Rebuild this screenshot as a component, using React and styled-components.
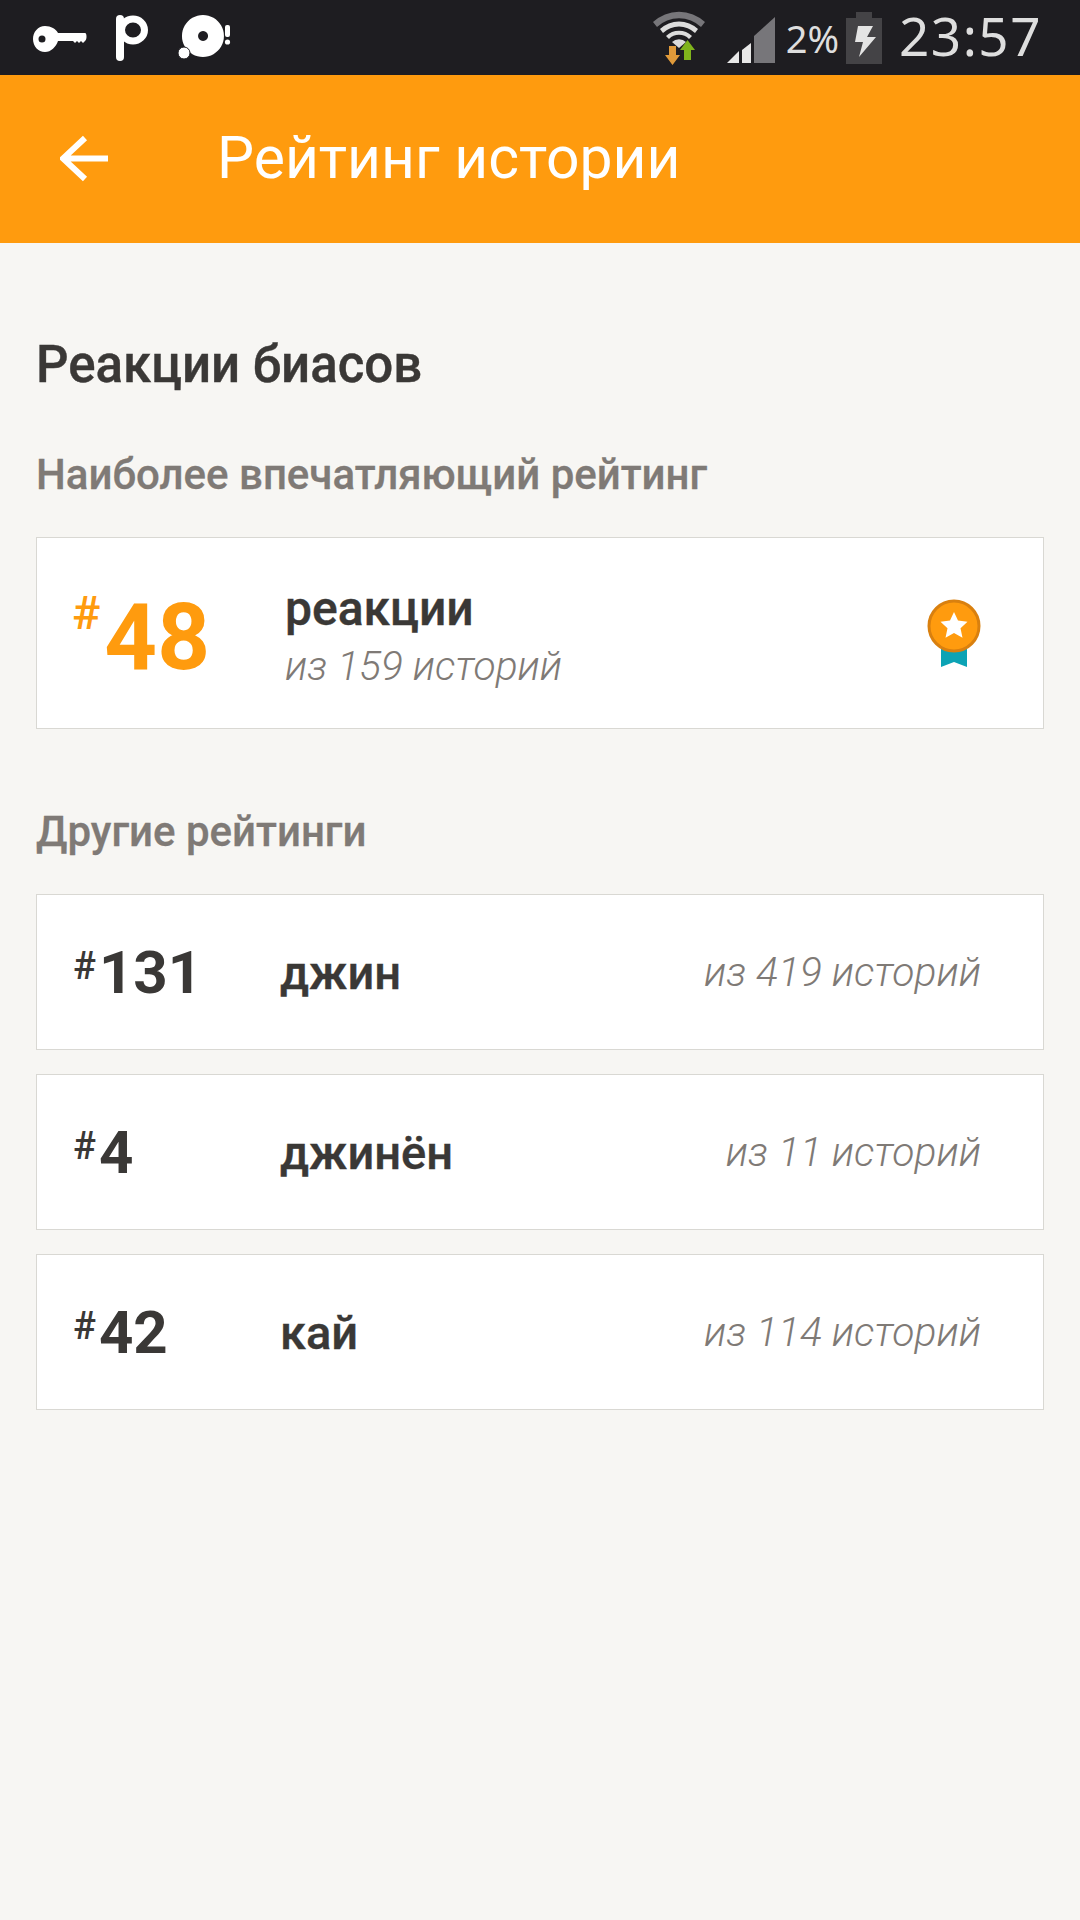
import React from "react";
import styled, { createGlobalStyle } from "styled-components";

const GlobalStyle = createGlobalStyle`
  html, body {
    margin: 0;
    padding: 0;
    background: #f7f6f3;
    font-family: Roboto, "Noto Sans", sans-serif;
  }
`;

const Page = styled.div`
  width: 1080px;
  height: 1920px;
  overflow: hidden;
  background: #f7f6f3;
`;

const StatusBar = styled.div`
  height: 75px;
  background: #1e1d21;
  display: flex;
  align-items: center;
  justify-content: space-between;
`;

const StatusGroup = styled.div`
  display: flex;
  align-items: center;
`;

const Percent = styled.span`
  font-family: "Noto Sans", sans-serif;
  font-size: 38px;
  color: #dedede;
  margin: 0 7px 0 11px;
`;

const Clock = styled.span`
  font-family: "Noto Sans", sans-serif;
  font-size: 53px;
  letter-spacing: 1.5px;
  color: #dedede;
  margin: 0 38px 4px 17px;
`;

const Header = styled.header`
  height: 168px;
  background: #ff9b0e;
  display: flex;
  align-items: center;
  padding-left: 60px;
`;

const Title = styled.h1`
  margin: 0 0 3px 109px;
  font-size: 58.8px;
  font-weight: 400;
  color: #fff;
`;

const Content = styled.main`
  padding: 93px 36px 0;
`;

const Heading = styled.h2`
  margin: 0;
  font-size: 51px;
  line-height: 58px;
  font-weight: 500;
  color: #3a3836;
  -webkit-text-stroke: 0.4px #3a3836;
`;

const SubHeading = styled.h3`
  margin: ${(p) => p.$top}px 0 ${(p) => p.$bottom}px;
  font-size: 42px;
  line-height: 48px;
  font-weight: 500;
  color: #7f7a76;
  -webkit-text-stroke: 0.3px #7f7a76;
`;

const Card = styled.div`
  box-sizing: border-box;
  height: ${(p) => (p.$featured ? 192 : 156)}px;
  margin-bottom: 24px;
  background: #fff;
  border: 1px solid #d9d8d3;
  display: flex;
  align-items: center;
  padding: 0 62px 0 36px;
`;

const Rank = styled.div`
  width: ${(p) => (p.$featured ? 212 : 207)}px;
  display: flex;
  align-items: flex-start;
  font-weight: 700;
  color: ${(p) => (p.$featured ? "#ff9b0e" : "#3a3836")};
  font-size: ${(p) => (p.$featured ? 92 : 60)}px;
  line-height: 1;
  padding-top: ${(p) => (p.$featured ? 10 : 2)}px;
`;

const Hash = styled.span`
  font-weight: 500;
  font-size: ${(p) => (p.$featured ? 47 : 38)}px;
  line-height: 1;
  margin-top: ${(p) => (p.$featured ? -3 : 4)}px;
  margin-left: ${(p) => (p.$featured ? -1 : 0)}px;
  margin-right: ${(p) => (p.$featured ? 4 : 3)}px;
`;

const Info = styled.div`
  flex: 1;
  display: flex;
  flex-direction: column;
  padding-top: ${(p) => (p.$featured ? 6 : 2)}px;
`;

const Name = styled.div`
  font-size: ${(p) => (p.$featured ? 48 : 47)}px;
  line-height: 54px;
  font-weight: 500;
  color: #3a3836;
  -webkit-text-stroke: 0.4px #3a3836;
`;

const Total = styled.div`
  font-size: 40.8px;
  line-height: 48px;
  font-style: italic;
  font-weight: 300;
  color: #7f7a76;
  margin-top: ${(p) => (p.$featured ? 6 : 0)}px;
`;

const KeyIcon = () => (
  <svg width="54" height="28" viewBox="0 0 54 28" style={{ margin: "4px 0 0 33px" }}>
    <path
      fill="#fff"
      fillRule="evenodd"
      d="M12 0c6 0 11 3 13 7h27c2 0 2 7 0 8l-2 2-2-2-2 2-2-2-2 2-2-2H25c-2 6-7 11-13 11C5 26 0 20 0 13S5 0 12 0zm-3 9.500a3.500 3.500 0 1 0 0 7 3.500 3.500 0 0 0 0-7z"
    />
  </svg>
);

const PIcon = () => (
  <svg width="32" height="46" viewBox="0 0 32 46" style={{ marginLeft: 29 }}>
    <path
      fill="none"
      stroke="#fff"
      strokeWidth="8"
      strokeLinecap="round"
      d="M4 42V4"
    />
    <ellipse cx="17" cy="15" rx="11.500" ry="11" fill="none" stroke="#fff" strokeWidth="7" />
  </svg>
);

const DiscIcon = () => (
  <svg width="54" height="46" viewBox="0 0 54 46" style={{ marginLeft: 30 }}>
    <path
      fill="#fff"
      fillRule="evenodd"
      d="M25 0a21 21 0 1 1-.1 0zm0 16a5 5 0 1 0 .1 0z"
    />
    <circle cx="6" cy="38" r="6" fill="#fff" stroke="#1e1d21" strokeWidth="1" />
    <rect x="47" y="10" width="5" height="12" rx="2" fill="#fff" />
    <circle cx="49.500" cy="27" r="2.600" fill="#fff" />
  </svg>
);

const WifiIcon = () => (
  <svg width="56" height="56" viewBox="0 0 56 56">
    <path d="M2 12a38 38 0 0 1 52 0l-4 5a32 32 0 0 0-44 0z" fill="#77767a" />
    <path d="M9 19a28 28 0 0 1 38 0l-3 4a23 23 0 0 0-32 0z" fill="#dcdcdc" />
    <path d="M15 26a19 19 0 0 1 26 0l-3 3a14 14 0 0 0-20 0z" fill="#dcdcdc" />
    <path d="M21 32a10 10 0 0 1 14 0l-7 6z" fill="#dcdcdc" />
    <path d="M18 36h7v9h4L21.500 55 14 45h4z" fill="#e09a3a" />
    <path d="M36.500 30L44 40h-4v10h-7V40h-4z" fill="#7fb31c" />
  </svg>
);

const SignalIcon = () => (
  <svg width="48" height="46" viewBox="0 0 48 46" style={{ marginLeft: 20, marginTop: 4 }}>
    <path d="M0 46l12-12v12z" fill="#e8e8e8" />
    <path d="M15 33l9-7v20h-9z" fill="#e8e8e8" />
    <path d="M27 19L48 0v46H27z" fill="#77767a" />
  </svg>
);

const BatteryIcon = () => (
  <svg width="36" height="52" viewBox="0 0 36 52">
    <path d="M10 0h16v6h10v46H0V6h10z" fill="#444346" />
    <path d="M12 14h15l-6 11h9L13 45l4-15H9z" fill="#e4e4e4" />
  </svg>
);

const BackArrow = () => (
  <svg width="48" height="48" viewBox="0 0 48 48">
    <path
      d="M48 23.500H4M25 3L3 23.500 25 44"
      fill="none"
      stroke="#fff"
      strokeWidth="6"
    />
  </svg>
);

const Medal = () => (
  <svg width="54" height="68" viewBox="0 0 54 68">
    <path d="M14 44h26v24l-13-5-13 5z" fill="#0ca3b5" />
    <circle cx="27" cy="27" r="25" fill="#ff9b0e" stroke="#d9800f" strokeWidth="3" />
    <path
      d="M27 13l4 8.500 9.500 1.200-7 6.500 2 9.500-8.500-4.700-8.500 4.700 2-9.500-7-6.500 9.500-1.200z"
      fill="#fff"
    />
  </svg>
);

const others = [
  { rank: 131, name: "джин", total: "из 419 историй" },
  { rank: 4, name: "джинён", total: "из 11 историй" },
  { rank: 42, name: "кай", total: "из 114 историй" },
];

const App = () => (
  <Page>
    <GlobalStyle />
    <StatusBar>
      <StatusGroup>
        <KeyIcon />
        <PIcon />
        <DiscIcon />
      </StatusGroup>
      <StatusGroup>
        <WifiIcon />
        <SignalIcon />
        <Percent>2%</Percent>
        <BatteryIcon />
        <Clock>23:57</Clock>
      </StatusGroup>
    </StatusBar>
    <Header>
      <BackArrow />
      <Title>Рейтинг истории</Title>
    </Header>
    <Content>
      <Heading>Реакции биасов</Heading>
      <SubHeading $top={57} $bottom={38}>
        Наиболее впечатляющий рейтинг
      </SubHeading>
      <Card $featured>
        <Rank $featured>
          <Hash $featured>#</Hash>48
        </Rank>
        <Info $featured>
          <Name $featured>реакции</Name>
          <Total $featured>из 159 историй</Total>
        </Info>
        <Medal />
      </Card>
      <SubHeading $top={79} $bottom={38}>
        Другие рейтинги
      </SubHeading>
      {others.map((item) => (
        <Card key={item.rank}>
          <Rank>
            <Hash>#</Hash>
            {item.rank}
          </Rank>
          <Info>
            <Name>{item.name}</Name>
          </Info>
          <Total>{item.total}</Total>
        </Card>
      ))}
    </Content>
  </Page>
);

export default App;
